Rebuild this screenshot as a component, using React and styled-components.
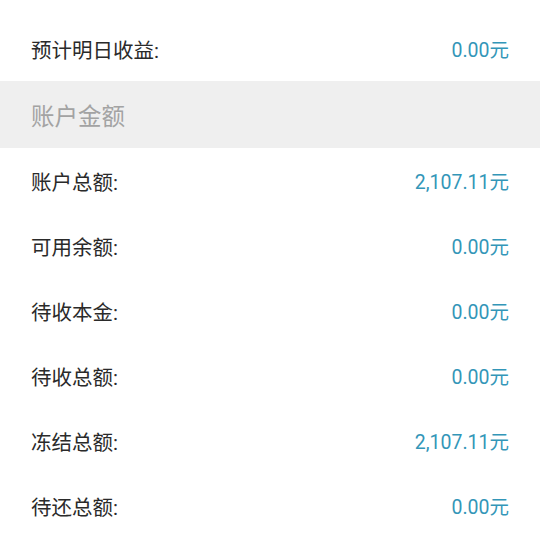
import React from "react";
import styled, { createGlobalStyle } from "styled-components";

const Global = createGlobalStyle`
  html, body { margin: 0; padding: 0; background: #fff; }
  body { font-family: Roboto, "Noto Sans CJK SC", sans-serif; }
`;

const Page = styled.div`
  width: 540px;
  padding-top: 16px;
  background: #fff;
`;

const Row = styled.div`
  display: flex;
  align-items: center;
  justify-content: space-between;
  height: 65px;
  padding: 0 31px;
`;

const Label = styled.span`
  font-size: 20.5px;
  color: #2a2a2a;
`;

const Value = styled.span`
  font-size: 19.5px;
  color: #3396b8;
`;

const Section = styled.div`
  display: flex;
  align-items: center;
  height: 67px;
  padding: 0 31px;
  background: #efefef;
  font-size: 23.5px;
  color: #a3a3a3;
`;

const rows = [
  ["账户总额:", "2,107.11元"],
  ["可用余额:", "0.00元"],
  ["待收本金:", "0.00元"],
  ["待收总额:", "0.00元"],
  ["冻结总额:", "2,107.11元"],
  ["待还总额:", "0.00元"],
];

export default function App() {
  return (
    <>
      <Global />
      <Page>
        <Row>
          <Label>预计明日收益:</Label>
          <Value>0.00元</Value>
        </Row>
        <Section>账户金额</Section>
        {rows.map(([l, v]) => (
          <Row key={l}>
            <Label>{l}</Label>
            <Value>{v}</Value>
          </Row>
        ))}
      </Page>
    </>
  );
}
